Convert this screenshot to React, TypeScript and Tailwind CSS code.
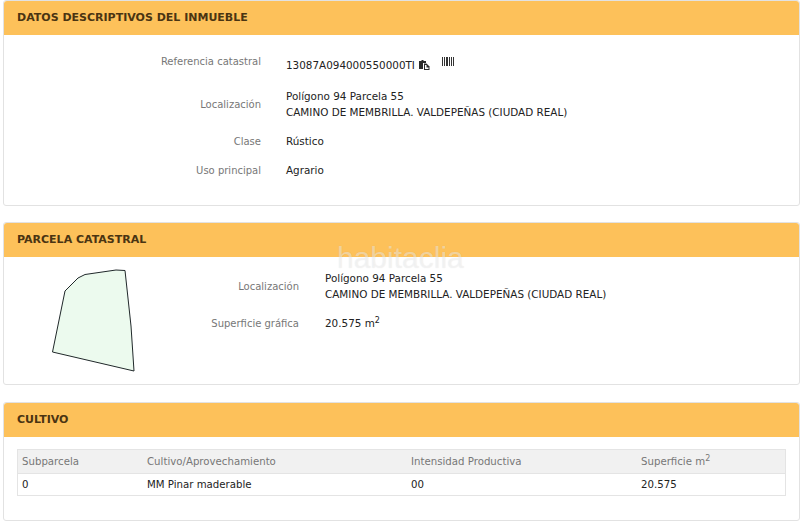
import React from 'react';

const font = "font-['DejaVu_Sans',Verdana,sans-serif]";

const Panel: React.FC<{ title: string; className: string; children: React.ReactNode }> = ({ title, className, children }) => (
  <section className={`ml-[3px] rounded-[3px] border border-[#e2e2e2] bg-white ${className}`}>
    <h2 className="flex h-[34px] items-center rounded-t-[3px] bg-[#fdc15a] pl-[13px] text-[11px] font-bold text-[#4a3412]">
      {title}
    </h2>
    {children}
  </section>
);

const Row: React.FC<{ label: string; labelWidth: string; className?: string; children: React.ReactNode }> = ({ label, labelWidth, className, children }) => (
  <div className={`flex items-center ${className ?? ''}`}>
    <div className={`text-right text-[10px] text-[#777777] ${labelWidth}`}>{label}</div>
    <div className="ml-[25px] leading-[16px] text-[#222222]">{children}</div>
  </div>
);

const App: React.FC = () => {
  return (
    <div className={`h-[523px] w-[800px] overflow-hidden bg-white text-[10.4px] ${font}`}>
      {/* Datos descriptivos */}
      <Panel title="DATOS DESCRIPTIVOS DEL INMUEBLE" className="h-[206px]">
        <div className="pt-[16px]">
          <Row label="Referencia catastral" labelWidth="w-[257px]" className="h-[20px]">
            <div className="flex items-center pt-[7px]">
              <span>13087A094000550000TI</span>
              <svg className="ml-[4px] h-[10px] w-[11px]" viewBox="0 0 11 10">
                <path d="M0 1h2.5V0h2v1H7v2H4v6H0z" fill="#2b2b2b" />
                <path d="M5 3.5h2.5l3 3V10H5z" fill="#2b2b2b" />
                <path d="M6 5h1.5v2.5H9.5V9H6z" fill="#ffffff" />
              </svg>
              <svg className="-mt-[7px] ml-[12px] h-[9px] w-[12px]" viewBox="0 0 12 9" fill="#333333">
                <path d="M0 0h1v9H0zM2 0h1v9H2zM4 0h2v9H4zM7 0h1v9H7zM9 0h1v9H9zM11 0h1v9h-1z" />
              </svg>
            </div>
          </Row>
          <Row label="Localización" labelWidth="w-[257px]" className="mt-[17px]">
            <div>Polígono 94 Parcela 55</div>
            <div>CAMINO DE MEMBRILLA. VALDEPEÑAS (CIUDAD REAL)</div>
          </Row>
          <Row label="Clase" labelWidth="w-[257px]" className="mt-[13px] h-[16px]">Rústico</Row>
          <Row label="Uso principal" labelWidth="w-[257px]" className="mt-[13px] h-[16px]">Agrario</Row>
        </div>
      </Panel>

      {/* Parcela catastral */}
      <Panel title="PARCELA CATASTRAL" className="relative mt-[16px] h-[163px]">
        <div className="flex">
          <svg className="ml-[47px] mt-[11px] h-[104px] w-[86px] shrink-0" viewBox="0 0 86 104">
            <polygon
              points="14,23 27,10 34,6.5 65,2 74,2.5 80,58 83,103 1.5,84"
              fill="#ecfaee"
              stroke="#20282a"
              strokeWidth="1"
            />
          </svg>
          <div className="pt-[13px]">
            <Row label="Localización" labelWidth="w-[162px]">
              <div className="pl-[1px]">Polígono 94 Parcela 55</div>
              <div className="pl-[1px]">CAMINO DE MEMBRILLA. VALDEPEÑAS (CIUDAD REAL)</div>
            </Row>
            <Row label="Superficie gráfica" labelWidth="w-[162px]" className="mt-[13px] h-[16px]">
              <span className="pl-[1px]">20.575 m<sup className="text-[8px]">2</sup></span>
            </Row>
          </div>
        </div>
        {/* watermark */}
        <span className="absolute left-[333px] top-[24px] font-['Liberation_Sans',Arial,sans-serif] text-[30px] leading-[22px] text-white/45 [text-shadow:0_0_1px_rgba(0,0,0,0.1)]">
          habitaclia
        </span>
      </Panel>

      {/* Cultivo */}
      <Panel title="CULTIVO" className="mt-[17px] h-[119px]">
        <div className="mx-[13px] mt-[12px] border border-[#e4e4e4]">
          <div className="flex h-[23px] items-center bg-[#f1f1f1] text-[10.2px] text-[#777777]">
            <div className="w-[129px] pl-[4px]">Subparcela</div>
            <div className="w-[264px]">Cultivo/Aprovechamiento</div>
            <div className="w-[230px]">Intensidad Productiva</div>
            <div>
              Superficie m<sup className="text-[8px]">2</sup>
            </div>
          </div>
          <div className="flex h-[22px] items-center border-t border-[#e4e4e4] text-[10.2px] text-[#222222]">
            <div className="w-[129px] pl-[4px]">0</div>
            <div className="w-[264px]">MM Pinar maderable</div>
            <div className="w-[230px]">00</div>
            <div>20.575</div>
          </div>
        </div>
      </Panel>
    </div>
  );
};

export default App;
